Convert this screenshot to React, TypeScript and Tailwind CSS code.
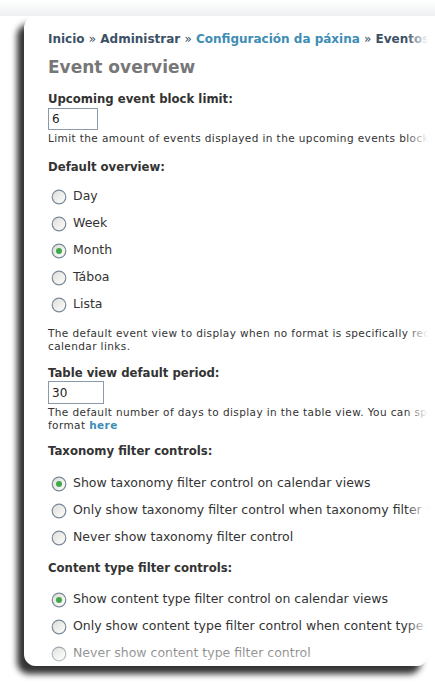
import React from 'react';

const font = { fontFamily: '"DejaVu Sans", Verdana, sans-serif' };

function Radio({ checked, label, faded }: { checked?: boolean; label: string; faded?: boolean }) {
  return (
    <div className="flex h-[27px] items-center">
      <svg width="16" height="16" viewBox="0 0 16 16" className="ml-[3px] shrink-0">
        <defs>
          <linearGradient id={checked ? 'rg-c' : 'rg-u'} x1="0" y1="0" x2="1" y2="1">
            <stop offset="0" stopColor="#dcdcd6" />
            <stop offset="1" stopColor="#ffffff" />
          </linearGradient>
        </defs>
        <circle cx="8" cy="8" r="6.8" fill={`url(#${checked ? 'rg-c' : 'rg-u'})`} stroke={faded ? '#9aa5b0' : '#7b8a99'} strokeWidth="1.2" />
        {checked && <circle cx="8" cy="8" r="3" fill="#3fa948" />}
      </svg>
      <span className={`ml-[6px] text-[12.5px] ${faded ? 'text-[#7f7f7f]' : 'text-[#333]'}`}>{label}</span>
    </div>
  );
}

export default function App() {
  return (
    <div className="relative h-[689px] w-[435px] overflow-hidden bg-white" style={font}>
      <div className="h-[16px] bg-gradient-to-b from-white to-[#eef0f3]" />
      <div className="relative ml-[24px] h-[650px] w-[404px] overflow-hidden rounded-[12px] bg-white shadow-[-7px_8px_6px_rgba(0,0,0,0.8)]">
        <div className="whitespace-nowrap pl-[24px] pt-[15px]">
          <div className="h-[16px] text-[12px] font-bold leading-[16px] text-[#3c5166]">
            Inicio <span className="font-normal">»</span> Administrar <span className="font-normal">»</span>{' '}
            <span className="text-[#3d8db5]">Configuración da páxina</span> <span className="font-normal">»</span> Eventos
          </div>

          <div className="mt-[8px] h-[24px] text-[17px] font-bold leading-[24px] text-[#777]">Event overview</div>

          <div className="mt-[12px] h-[16px] text-[11.7px] font-bold leading-[16px] text-[#333]">Upcoming event block limit:</div>
          <div className="mt-[1px] flex h-[22px] w-[50px] items-center border border-[#8a9aab] pl-[3px] text-[12px] text-[#222]">6</div>
          <div className="mt-[2px] h-[13px] text-[10.5px] leading-[13px] tracking-[0.4px] text-[#333]">
            Limit the amount of events displayed in the upcoming events block.
          </div>

          <div className="mt-[14px] h-[16px] text-[11.7px] font-bold leading-[16px] text-[#333]">Default overview:</div>
          <div className="mt-[8px]">
            <Radio label="Day" />
            <Radio label="Week" />
            <Radio label="Month" checked />
            <Radio label="Táboa" />
            <Radio label="Lista" />
          </div>
          <div className="mt-[9px] text-[10.5px] leading-[13px] tracking-[0.4px] text-[#333]">
            <div>The default event view to display when no format is specifically requested. This is also the view used for</div>
            <div>calendar links.</div>
          </div>

          <div className="mt-[12px] h-[16px] text-[11.7px] font-bold leading-[16px] text-[#333]">Table view default period:</div>
          <div className="flex h-[23px] w-[56px] items-center border border-[#8a9aab] pl-[3px] text-[12px] text-[#222]">30</div>
          <div className="mt-[2px] text-[10.5px] leading-[13px] tracking-[0.4px] text-[#333]">
            <div>The default number of days to display in the table view. You can specify a different number per view in the URL</div>
            <div>
              format <span className="font-bold text-[#3d8db5]">here</span>
            </div>
          </div>

          <div className="mt-[11px] h-[16px] text-[11.7px] font-bold leading-[16px] text-[#333]">Taxonomy filter controls:</div>
          <div className="mt-[11px]">
            <Radio label="Show taxonomy filter control on calendar views" checked />
            <Radio label="Only show taxonomy filter control when taxonomy filter view is requested" />
            <Radio label="Never show taxonomy filter control" />
          </div>

          <div className="mt-[9px] h-[16px] text-[11.7px] font-bold leading-[16px] text-[#333]">Content type filter controls:</div>
          <div className="mt-[10px]">
            <Radio label="Show content type filter control on calendar views" checked />
            <Radio label="Only show content type filter control when content type filter view is requested" />
            <Radio label="Never show content type filter control" faded />
          </div>
        </div>
        <div className="pointer-events-none absolute right-0 top-0 h-full w-[22px] bg-gradient-to-r from-transparent to-white" />
        <div className="pointer-events-none absolute bottom-0 left-0 h-[20px] w-full bg-gradient-to-b from-transparent to-white/50" />
      </div>
    </div>
  );
}
